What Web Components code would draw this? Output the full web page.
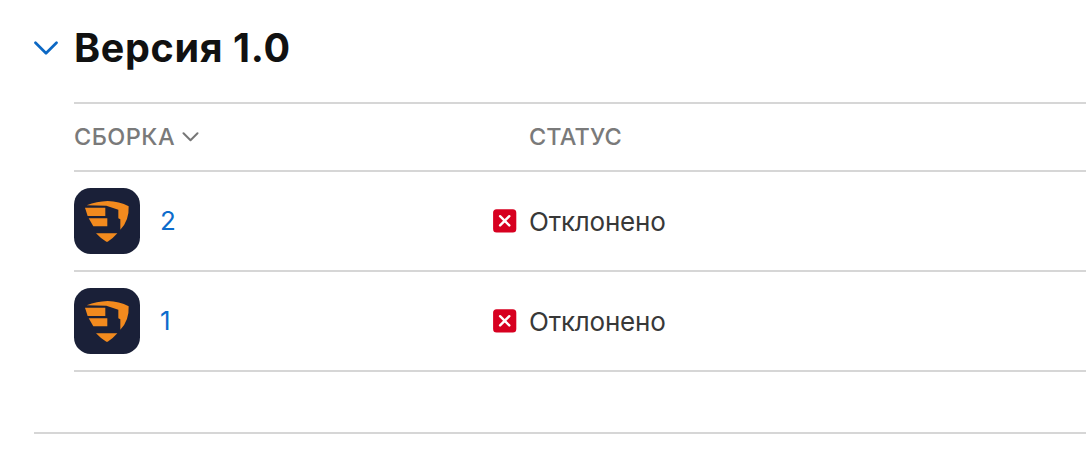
<!DOCTYPE html>
<html lang="ru">
<head>
<meta charset="utf-8">
<title>Версия 1.0</title>
<style>
    body {
        margin: 0;
        background: #fff;
        color: #383838;
        font: 26px/32px Inter, "Liberation Sans", sans-serif;
        overflow: hidden;
    }
</style>
</head>
<body>
<version-section>
    <span slot="title">Версия 1.0</span>
    <build-table>
        <build-row build="2">Отклонено</build-row>
        <build-row build="1">Отклонено</build-row>
    </build-table>
</version-section>

<script>
const define = (name, html, setup) => {
    const template = document.createElement('template')
    template.innerHTML = html
    customElements.define(name, class extends HTMLElement {
        constructor() {
            super()
            this.attachShadow({mode: 'open'})
            this.shadowRoot.appendChild(template.content.cloneNode(true))
            if (setup) setup(this.shadowRoot, this)
        }
    })
}

define('app-icon', `
    <style>
        :host { display: block; width: 66px; height: 66px; }
        svg { display: block; }
    </style>
    <svg width="66" height="66" viewBox="24 24 198 198">
        <rect x="24" y="24" width="198" height="198" rx="50" fill="#1a2038"/>
        <g fill="#f28a1e">
            <path d="M62 76Q92 64 125 63Q160 64 188 79Q190 122 163 149V118L157 115V89L121 77Z"/>
            <path d="M57 83H118V108H65Z"/>
            <path d="M68 115H124V139H82Z"/>
            <path d="M90 160H154Q141 175 127 184Q123 187 119 184Q103 174 90 160Z"/>
        </g>
    </svg>
`)

define('status-icon', `
    <style>
        :host { display: block; width: 24px; height: 24px; }
        svg { display: block; }
    </style>
    <svg width="24" height="24" viewBox="0 0 24 24">
        <rect x=".1" y=".2" width="23.2" height="23.4" rx="3.5" fill="#d70020"/>
        <path d="M7.1 7.2L16.3 16.4M16.3 7.2L7.1 16.4" stroke="#fff" stroke-width="2.4" stroke-linecap="round"/>
    </svg>
`)

define('version-section', `
    <style>
        :host { display: block; height: 432px; margin-left: 34px; border-bottom: 2px solid #d6d6d6; }
        header { display: flex; align-items: center; height: 102px; box-sizing: border-box; padding-bottom: 6px; }
        svg { flex: none; margin-right: 16px; }
        h2 { margin: 0; color: #111; font-size: 39.5px; font-weight: 700; line-height: 48px; letter-spacing: .65px; }
        section { padding-left: 40px; }
    </style>
    <header>
        <svg width="24" height="16" viewBox="0 0 24 16" fill="none">
            <path d="M1.5 2.8L12 13.2L22.5 2.8" stroke="#0c68c4" stroke-width="2.7" stroke-linecap="round" stroke-linejoin="round"/>
        </svg>
        <h2><slot name="title"></slot></h2>
    </header>
    <section><slot></slot></section>
`)

define('build-table', `
    <style>
        :host { display: block; border-top: 2px solid #d6d6d6; }
        .head { display: flex; align-items: center; height: 66px; border-bottom: 2px solid #d6d6d6; color: #7a7a7a; font-size: 23.5px; font-weight: 450; }
        .build { display: flex; align-items: center; gap: 7px; width: 455px; }
        .head span { letter-spacing: .1px; }
        .build span { letter-spacing: .45px; }
    </style>
    <div class="head">
        <div class="build">
            <span>СБОРКА</span>
            <svg width="17" height="10" viewBox="0 0 17 10" fill="none">
                <path d="M1.5 1.2L8.5 8.2L15.5 1.2" stroke="#777" stroke-width="2" stroke-linecap="round" stroke-linejoin="round"/>
            </svg>
        </div>
        <span>СТАТУС</span>
    </div>
    <slot></slot>
`)

define('build-row', `
    <style>
        :host { display: flex; align-items: center; height: 98px; border-bottom: 2px solid #d6d6d6; }
        .build { display: flex; align-items: center; gap: 20px; width: 419px; }
        a { color: #0c6ccc; }
        .status { display: flex; align-items: center; gap: 12px; }
        .text { padding-top: 2px; letter-spacing: -.22px; }
    </style>
    <div class="build"><app-icon></app-icon><a></a></div>
    <div class="status"><status-icon></status-icon><span class="text"><slot></slot></span></div>
`, (root, host) => {
    root.querySelector('a').textContent = host.getAttribute('build')
})
</script>
</body>
</html>
